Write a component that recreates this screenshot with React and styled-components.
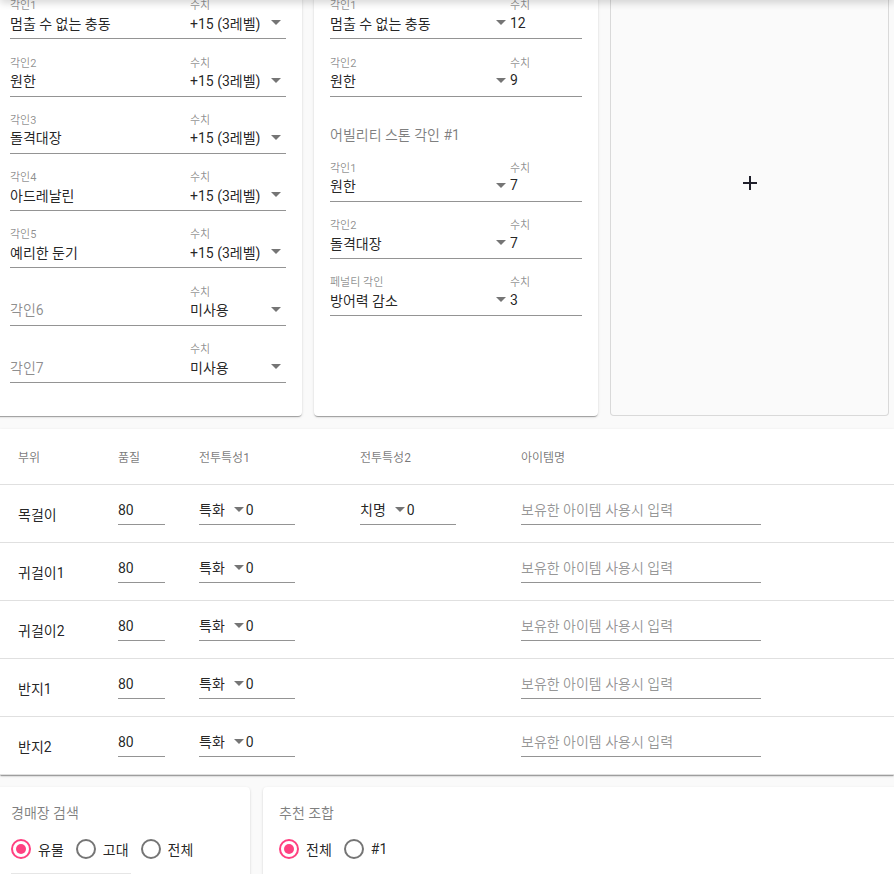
import React from 'react'
import styled, { createGlobalStyle } from 'styled-components'

const GlobalStyle = createGlobalStyle`
  html, body {
    margin: 0;
    overflow: hidden;
    background: #fafafa;
    font-family: Roboto, "Noto Sans CJK KR", sans-serif;
    color: rgba(0, 0, 0, 0.87);
  }
  * { box-sizing: border-box; }
`

const AppBarShadow = styled.div`
  position: fixed;
  top: -8px;
  left: 0;
  right: 0;
  height: 8px;
  box-shadow: 0 2px 9px rgba(0, 0, 0, 0.2);
  z-index: 10;
`

const TopRow = styled.div`
  display: grid;
  grid-template-columns: 308px 284px 279px;
  column-gap: 12px;
  margin: -50px 0 0 -6px;
`

const Card = styled.div`
  background: #fff;
  border-radius: 4px;
  box-shadow: 0 2px 1px -1px rgba(0,0,0,0.2), 0 1px 1px 0 rgba(0,0,0,0.14), 0 1px 3px 0 rgba(0,0,0,0.12);
  padding: 12px 16px 33px;
`

const AddCard = styled.div`
  display: flex;
  align-items: center;
  justify-content: center;
  border: 1px solid rgba(0, 0, 0, 0.13);
  border-radius: 4px;
  background: #fafafa;
  color: #1f1f2a;
`

const CardTitle = styled.div`
  font-size: 14px;
  line-height: 20px;
  color: rgba(0, 0, 0, 0.5);
  margin-top: ${({ $spaced }) => ($spaced ? '28px' : '0')};
`

const Field = styled.div`
  display: flex;
  margin-top: 17.3px;
  border-bottom: 1px solid rgba(0, 0, 0, 0.42);
`

const Part = styled.div`
  display: flex;
  flex-direction: column;
  width: ${({ $w }) => ($w ? `${$w}px` : 'auto')};
  flex: ${({ $w }) => ($w ? 'none' : '1')};
`

const Label = styled.div`
  font-size: 11px;
  line-height: 13px;
  height: 13px;
  color: rgba(0, 0, 0, 0.45);
`

const Value = styled.div`
  display: flex;
  align-items: center;
  justify-content: space-between;
  height: 26px;
  padding-bottom: 5px;
  padding-right: ${({ $pr }) => $pr || 0}px;
  font-size: 14px;
  color: ${({ $muted }) => ($muted ? 'rgba(0,0,0,0.45)' : 'rgba(0,0,0,0.87)')};
`

const Arrow = styled.span`
  display: inline-block;
  width: 0;
  height: 0;
  border-left: 5px solid transparent;
  border-right: 5px solid transparent;
  border-top: 5px solid rgba(0, 0, 0, 0.54);
  margin: ${({ $m }) => $m || '0'};
`

const Table = styled.div`
  margin-top: 13px;
  background: #fff;
  box-shadow: 0 2px 1px -1px rgba(0,0,0,0.2), 0 1px 1px 0 rgba(0,0,0,0.14), 0 1px 3px 0 rgba(0,0,0,0.12);
`

const Row = styled.div`
  display: grid;
  grid-template-columns: 100px 81px 161px 161px 240px;
  align-items: center;
  padding-left: 18px;
  height: ${({ $head }) => ($head ? '56px' : '58px')};
  border-bottom: 1px solid #e0e0e0;
  font-size: ${({ $head }) => ($head ? '12px' : '14px')};
  color: ${({ $head }) => ($head ? 'rgba(0,0,0,0.54)' : 'rgba(0,0,0,0.87)')};
`

const Underlined = styled.div`
  display: flex;
  align-items: center;
  width: ${({ $w }) => $w}px;
  height: 26px;
  padding: 1px 0 4px;
  margin-bottom: 4px;
  line-height: 20px;
  font-size: 14px;
  border-bottom: 1px solid rgba(0, 0, 0, 0.42);
  color: ${({ $muted }) => ($muted ? 'rgba(0,0,0,0.42)' : 'rgba(0,0,0,0.87)')};
`

const BottomRow = styled.div`
  display: grid;
  grid-template-columns: 255px 1fr;
  column-gap: 13px;
  margin: 12px -20px 0 -5px;
`

const PanelCard = styled(Card)`
  padding: 16px 16px 40px;
  height: 140px;
`

const RadioGroup = styled.div`
  display: flex;
  align-items: center;
  height: 24px;
  margin-top: 14px;
`

const RadioItem = styled.label`
  display: flex;
  align-items: center;
  margin-right: 12px;
  font-size: 14px;
  color: rgba(0, 0, 0, 0.87);
`

const RadioCircle = styled.span`
  display: inline-flex;
  align-items: center;
  justify-content: center;
  width: 20px;
  height: 20px;
  margin-right: 7px;
  border-radius: 50%;
  border: 2px solid ${({ $on }) => ($on ? '#ff4081' : '#757575')};
  &::after {
    content: '';
    width: 10px;
    height: 10px;
    border-radius: 50%;
    background: ${({ $on }) => ($on ? '#ff4081' : 'transparent')};
  }
`

const FilterStub = styled.div`
  width: 120px;
  height: 40px;
  margin-top: 12px;
  border-top: 1px solid #e6e6e6;
`

const leftRows = [
  ['각인1', '멈출 수 없는 충동', '+15 (3레벨)'],
  ['각인2', '원한', '+15 (3레벨)'],
  ['각인3', '돌격대장', '+15 (3레벨)'],
  ['각인4', '아드레날린', '+15 (3레벨)'],
  ['각인5', '예리한 둔기', '+15 (3레벨)'],
  ['', '각인6', '미사용'],
  ['', '각인7', '미사용'],
]

const accRows = [
  ['각인1', '멈출 수 없는 충동', '12'],
  ['각인2', '원한', '9'],
]

const stoneRows = [
  ['각인1', '원한', '7'],
  ['각인2', '돌격대장', '7'],
  ['페널티 각인', '방어력 감소', '3'],
]

const items = ['목걸이', '귀걸이1', '귀걸이2', '반지1', '반지2']

const StoneField = ({ label, name, value }) => (
  <Field>
    <Part $w={180}>
      <Label>{label}</Label>
      <Value $pr={4}>
        <span>{name}</span>
        <Arrow />
      </Value>
    </Part>
    <Part>
      <Label>수치</Label>
      <Value>{value}</Value>
    </Part>
  </Field>
)

const App = () => {
  return (
    <>
      <GlobalStyle />
      <AppBarShadow />
      <TopRow>
        <Card>
          <CardTitle>각인</CardTitle>
          {leftRows.map(([label, name, level]) => (
            <Field key={name}>
              <Part $w={180}>
                <Label>{label}</Label>
                <Value $muted={!label}>{name}</Value>
              </Part>
              <Part>
                <Label>수치</Label>
                <Value $pr={5}>
                  <span>{level}</span>
                  <Arrow />
                </Value>
              </Part>
            </Field>
          ))}
        </Card>
        <Card>
          <CardTitle>장신구 각인</CardTitle>
          {accRows.map(([l, n, v]) => (
            <StoneField key={l} label={l} name={n} value={v} />
          ))}
          <CardTitle $spaced>어빌리티 스톤 각인 #1</CardTitle>
          {stoneRows.map(([l, n, v]) => (
            <StoneField key={l} label={l} name={n} value={v} />
          ))}
        </Card>
        <AddCard>
          <svg width="14" height="14" viewBox="0 0 14 14">
            <path d="M7 0v14M0 7h14" stroke="currentColor" strokeWidth="2" />
          </svg>
        </AddCard>
      </TopRow>

      <Table>
        <Row $head>
          <span>부위</span>
          <span>품질</span>
          <span>전투특성1</span>
          <span>전투특성2</span>
          <span>아이템명</span>
        </Row>
        {items.map((item, i) => (
          <Row key={item}>
            <span>{item}</span>
            <Underlined $w={47}>80</Underlined>
            <Underlined $w={96}>
              특화<Arrow $m="0 2px 0 9px" />0
            </Underlined>
            {i === 0 ? (
              <Underlined $w={96}>
                치명<Arrow $m="0 2px 0 9px" />0
              </Underlined>
            ) : (
              <span />
            )}
            <Underlined $w={240} $muted>보유한 아이템 사용시 입력</Underlined>
          </Row>
        ))}
      </Table>

      <BottomRow>
        <PanelCard>
          <CardTitle>경매장 검색</CardTitle>
          <RadioGroup>
            <RadioItem><RadioCircle $on />유물</RadioItem>
            <RadioItem><RadioCircle />고대</RadioItem>
            <RadioItem><RadioCircle />전체</RadioItem>
          </RadioGroup>
          <FilterStub />
        </PanelCard>
        <PanelCard>
          <CardTitle>추천 조합</CardTitle>
          <RadioGroup>
            <RadioItem><RadioCircle $on />전체</RadioItem>
            <RadioItem><RadioCircle />#1</RadioItem>
          </RadioGroup>
        </PanelCard>
      </BottomRow>
    </>
  )
}

export default App
